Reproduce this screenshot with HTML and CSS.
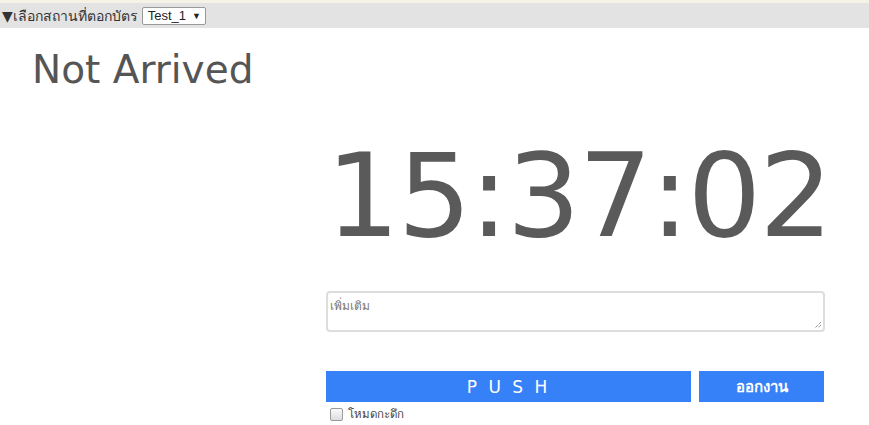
FILE: index.html
```html
<!DOCTYPE html>
<html lang="th">
<head>
<meta charset="utf-8">
<link rel="stylesheet" href="styles.css">
</head>
<body>
<div class="topbar">
  <span class="toplabel">▼เลือกสถานที่ตอกบัตร</span>
  <span class="select">Test_1<span class="caret">▼</span></span>
</div>
<div class="status">Not Arrived</div>
<div class="panel">
  <div class="clock">15:37:02</div>
  <div class="note"><span class="placeholder">เพิ่มเติม</span>
    <svg class="grip" width="8" height="8" viewBox="0 0 8 8"><path d="M7 1L1 7M7 4L4 7" stroke="#666" stroke-width="1" stroke-dasharray="1 1"/></svg>
  </div>
  <div class="buttons">
    <div class="btn push">P U S H</div>
    <div class="btn out">ออกงาน</div>
  </div>
  <label class="night"><span class="check"></span>โหมดกะดึก</label>
</div>
</body>
</html>
```
FILE: styles.css
```css
html, body { margin: 0; padding: 0; background: #fff; }
body { font-family: "DejaVu Sans", Tahoma, sans-serif; color: #555; }
.topbar {
  height: 25px;
  border-top: 3px solid #f6f2e4;
  background: #e3e3e3;
  display: flex;
  align-items: center;
  padding-left: 2px;
  font-size: 14px;
  color: #333;
}
.toplabel { margin-right: 4px; }
.select {
  display: inline-flex;
  align-items: center;
  height: 16px;
  padding: 0 4px 0 5px;
  border: 1px solid #999;
  background: #fff;
  font-family: "Liberation Sans", Arial, sans-serif;
  font-size: 13px;
  color: #222;
  border-radius: 2px;
}
.caret { font-size: 9px; margin-left: 6px; color: #222; }
.status {
  font-size: 39px;
  color: #555;
  padding-left: 32px;
  margin-top: 18px;
  line-height: 48px;
}
.panel { margin-left: 326px; width: 499px; }
.clock {
  font-size: 116px;
  letter-spacing: -2px;
  line-height: 130px;
  margin-top: 37px;
  text-align: right;
  margin-right: -5px;
  color: #5a5a5a;
}
.note {
  position: relative;
  margin-top: 30px;
  height: 33px;
  border: 2px solid #ddd;
  border-radius: 4px;
  padding: 2px 2px;
}
.placeholder { font-size: 12px; color: #777; }
.grip { position: absolute; right: 1px; bottom: 1px; }
.buttons { display: flex; gap: 8px; margin-top: 39px; }
.btn {
  height: 31px;
  background: #3781f8;
  color: #fff;
  display: flex;
  align-items: center;
  justify-content: center;
}
.push { width: 365px; font-size: 17px; letter-spacing: 3px; }
.out { width: 125px; font-size: 15px; font-weight: bold; }
.night { display: flex; align-items: center; font-size: 11.5px; color: #444; margin-top: 3px; padding-left: 4px; }
.check {
  width: 11px; height: 11px;
  border: 1px solid #999;
  border-radius: 2px;
  background: linear-gradient(#fafafa, #ddd);
  margin-right: 5px;
}
```
